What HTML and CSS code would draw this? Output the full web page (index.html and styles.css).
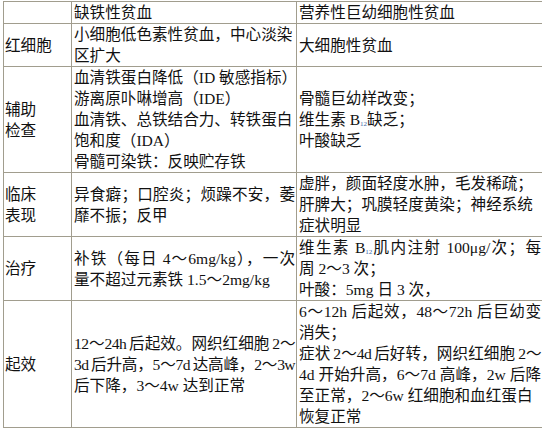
FILE: index.html
```html
<!DOCTYPE html>
<html lang="zh-CN">
<head>
<meta charset="utf-8">
<title>缺铁性贫血与营养性巨幼细胞性贫血</title>
<link rel="stylesheet" href="styles.css">
</head>
<body>
<table class="cmp">
  <colgroup>
    <col class="c1">
    <col class="c2">
    <col class="c3">
  </colgroup>
  <tr>
    <td class="lab"></td>
    <td>缺铁性贫血</td>
    <td>营养性巨幼细胞性贫血</td>
  </tr>
  <tr>
    <td class="lab">红细胞</td>
    <td>小细胞低色素性贫血，中心淡染<br>区扩大</td>
    <td>大细胞性贫血</td>
  </tr>
  <tr>
    <td class="lab">辅助<br>检查</td>
    <td>血清铁蛋白降低（ID 敏感指标）<br>游离原卟啉增高（IDE）<br>血清铁、总铁结合力、转铁蛋白<br>饱和度（IDA）<br>骨髓可染铁：反映贮存铁</td>
    <td>骨髓巨幼样改变；<br>维生素 B<sub>12</sub>缺乏；<br>叶酸缺乏</td>
  </tr>
  <tr>
    <td class="lab">临床<br>表现</td>
    <td><span class="j">异食癖；口腔炎；烦躁不安，萎</span>靡不振；反甲</td>
    <td>虚胖，颜面轻度水肿，毛发稀疏；<br>肝脾大；巩膜轻度黄染；神经系统<br>症状明显</td>
  </tr>
  <tr>
    <td class="lab">治疗</td>
    <td><span class="j">补铁（每日 4～6mg/kg），一次</span>量不超过元素铁 1.5～2mg/kg</td>
    <td><span class="j">维生素 B<sub>12</sub>肌内注射 100μg/次；每</span>周 2～3 次；<br>叶酸：5mg 日 3 次，</td>
  </tr>
  <tr>
    <td class="lab">起效</td>
    <td><span class="j tight">12～24h 后起效。网织红细胞 2～</span><span class="j tight">3d 后升高，5～7d 达高峰，2～3w</span>后下降，3～4w 达到正常</td>
    <td><span class="j">6～12h 后起效，48～72h 后巨幼变</span>消失；<br><span class="j tight">症状 2～4d 后好转，网织红细胞 2～</span><span class="j">4d 开始升高，6～7d 高峰，2w 后降</span>至正常，2～6w 红细胞和血红蛋白<br>恢复正常</td>
  </tr>
</table>
</body>
</html>
```
FILE: styles.css
```css
html, body {
  margin: 0;
  padding: 0;
  background: #ffffff;
}

body {
  padding: 1px 0 0 3px;
}

.cmp {
  border-collapse: collapse;
  table-layout: fixed;
  width: 539px;
  font-family: "Liberation Serif", "Noto Sans CJK SC", sans-serif;
  font-size: 15.6px;
  line-height: 21px;
  color: #111111;
}

.c1 { width: 68px; }
.c2 { width: 225px; }
.c3 { width: 246px; }

.cmp td {
  border: 1px solid #a19d8e;
  padding: 0 1px 0 2px;
  vertical-align: middle;
  text-align: left;
  white-space: nowrap;
  overflow: hidden;
}

.cmp td.lab {
  padding-left: 1px;
}

.j {
  display: block;
  text-align: justify;
  text-align-last: justify;
}

.tight {
  letter-spacing: -0.6px;
  word-spacing: -1px;
}

sub {
  font-size: 7px;
  line-height: 0;
  vertical-align: -1px;
  color: #3a5fa8;
}
```
